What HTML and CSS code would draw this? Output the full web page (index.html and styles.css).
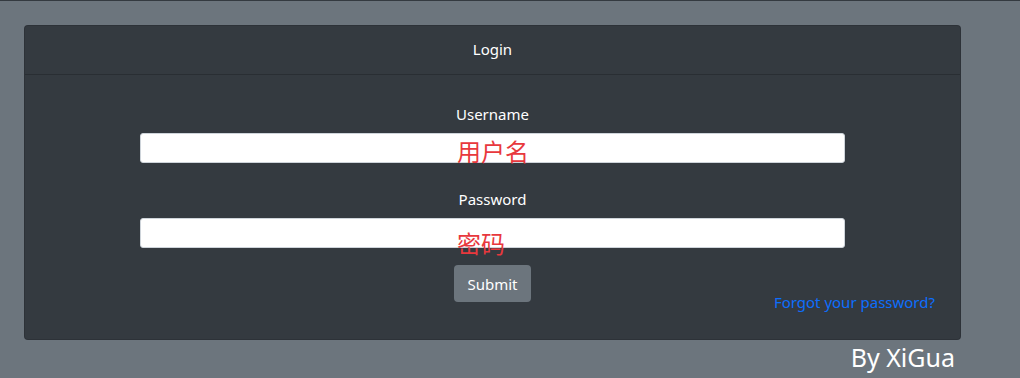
FILE: index.html
```html
<!DOCTYPE html>
<html lang="en">
<head>
    <meta charset="UTF-8">
    <meta name="viewport" content="width=device-width, initial-scale=1.0">
    <title>Login</title>
    <link rel="stylesheet" href="styles.css">
</head>
<body>
    <div class="page">
        <div class="card">
            <div class="card-header">Login</div>

            <form class="card-body" method="POST" action="/login">
                <div class="form-group">
                    <label for="username">Username</label>
                    <div class="field">
                        <input type="text" id="username" name="username">
                        <span class="note">用户名</span>
                    </div>
                </div>

                <div class="form-group">
                    <label for="password">Password</label>
                    <div class="field">
                        <input type="password" id="password" name="password">
                        <span class="note">密码</span>
                    </div>
                </div>

                <div class="actions">
                    <button type="submit" class="btn-submit">Submit</button>
                    <a href="#" class="forgot-link">Forgot your password?</a>
                </div>
            </form>
        </div>

        <div class="credit">By XiGua</div>
    </div>
</body>
</html>
```

FILE: styles.css
```css
* {
    box-sizing: border-box;
}

body {
    margin: 0;
    min-height: 378px;
    background-color: #6c757d;
    border-top: 1px solid #343a40;
    font-family: "Segoe UI", "Noto Sans", "Noto Sans CJK SC", sans-serif;
    font-size: 15px;
    color: #ffffff;
}

.page {
    width: 937px;
    margin: 24px 0 0 24px;
}

.card {
    background-color: #343a40;
    border: 1px solid rgba(0, 0, 0, 0.125);
    border-radius: 4px;
}

.card-header {
    height: 49px;
    line-height: 47px;
    text-align: center;
    border-bottom: 1px solid rgba(0, 0, 0, 0.2);
}

.card-body {
    margin: 0;
    padding: 27px 25px 26px;
}

.form-group {
    text-align: center;
    margin-bottom: 24px;
}

.form-group + .form-group {
    margin-bottom: 17px;
}

label {
    display: block;
    line-height: 24px;
    margin-bottom: 7px;
}

.field {
    position: relative;
    width: 705px;
    margin: 0 auto;
}

input[type="text"],
input[type="password"] {
    display: block;
    width: 100%;
    height: 30px;
    border: 1px solid #ced4da;
    border-radius: 3px;
    background: #ffffff;
}

/* red annotation painted over the inputs */
.note {
    position: absolute;
    left: 317px;
    top: 2px;
    font-family: "Noto Sans CJK SC", sans-serif;
    font-size: 24px;
    line-height: 32px;
    color: #e8383d;
    pointer-events: none;
}

.form-group + .form-group .note {
    top: 9px;
}

.actions {
    display: grid;
    grid-template-columns: 1fr auto 1fr;
    align-items: start;
}

.btn-submit {
    grid-column: 2;
    height: 37px;
    padding: 0 13px;
    border: none;
    border-radius: 4px;
    background-color: #6c757d;
    color: #ffffff;
    font-family: inherit;
    font-size: 15px;
}

.forgot-link {
    justify-self: end;
    margin-top: 26px;
    line-height: 22px;
    color: #0d6efd;
    text-decoration: none;
}

.credit {
    text-align: right;
    padding-right: 6px;
    font-size: 25px;
    line-height: 34px;
}
```
